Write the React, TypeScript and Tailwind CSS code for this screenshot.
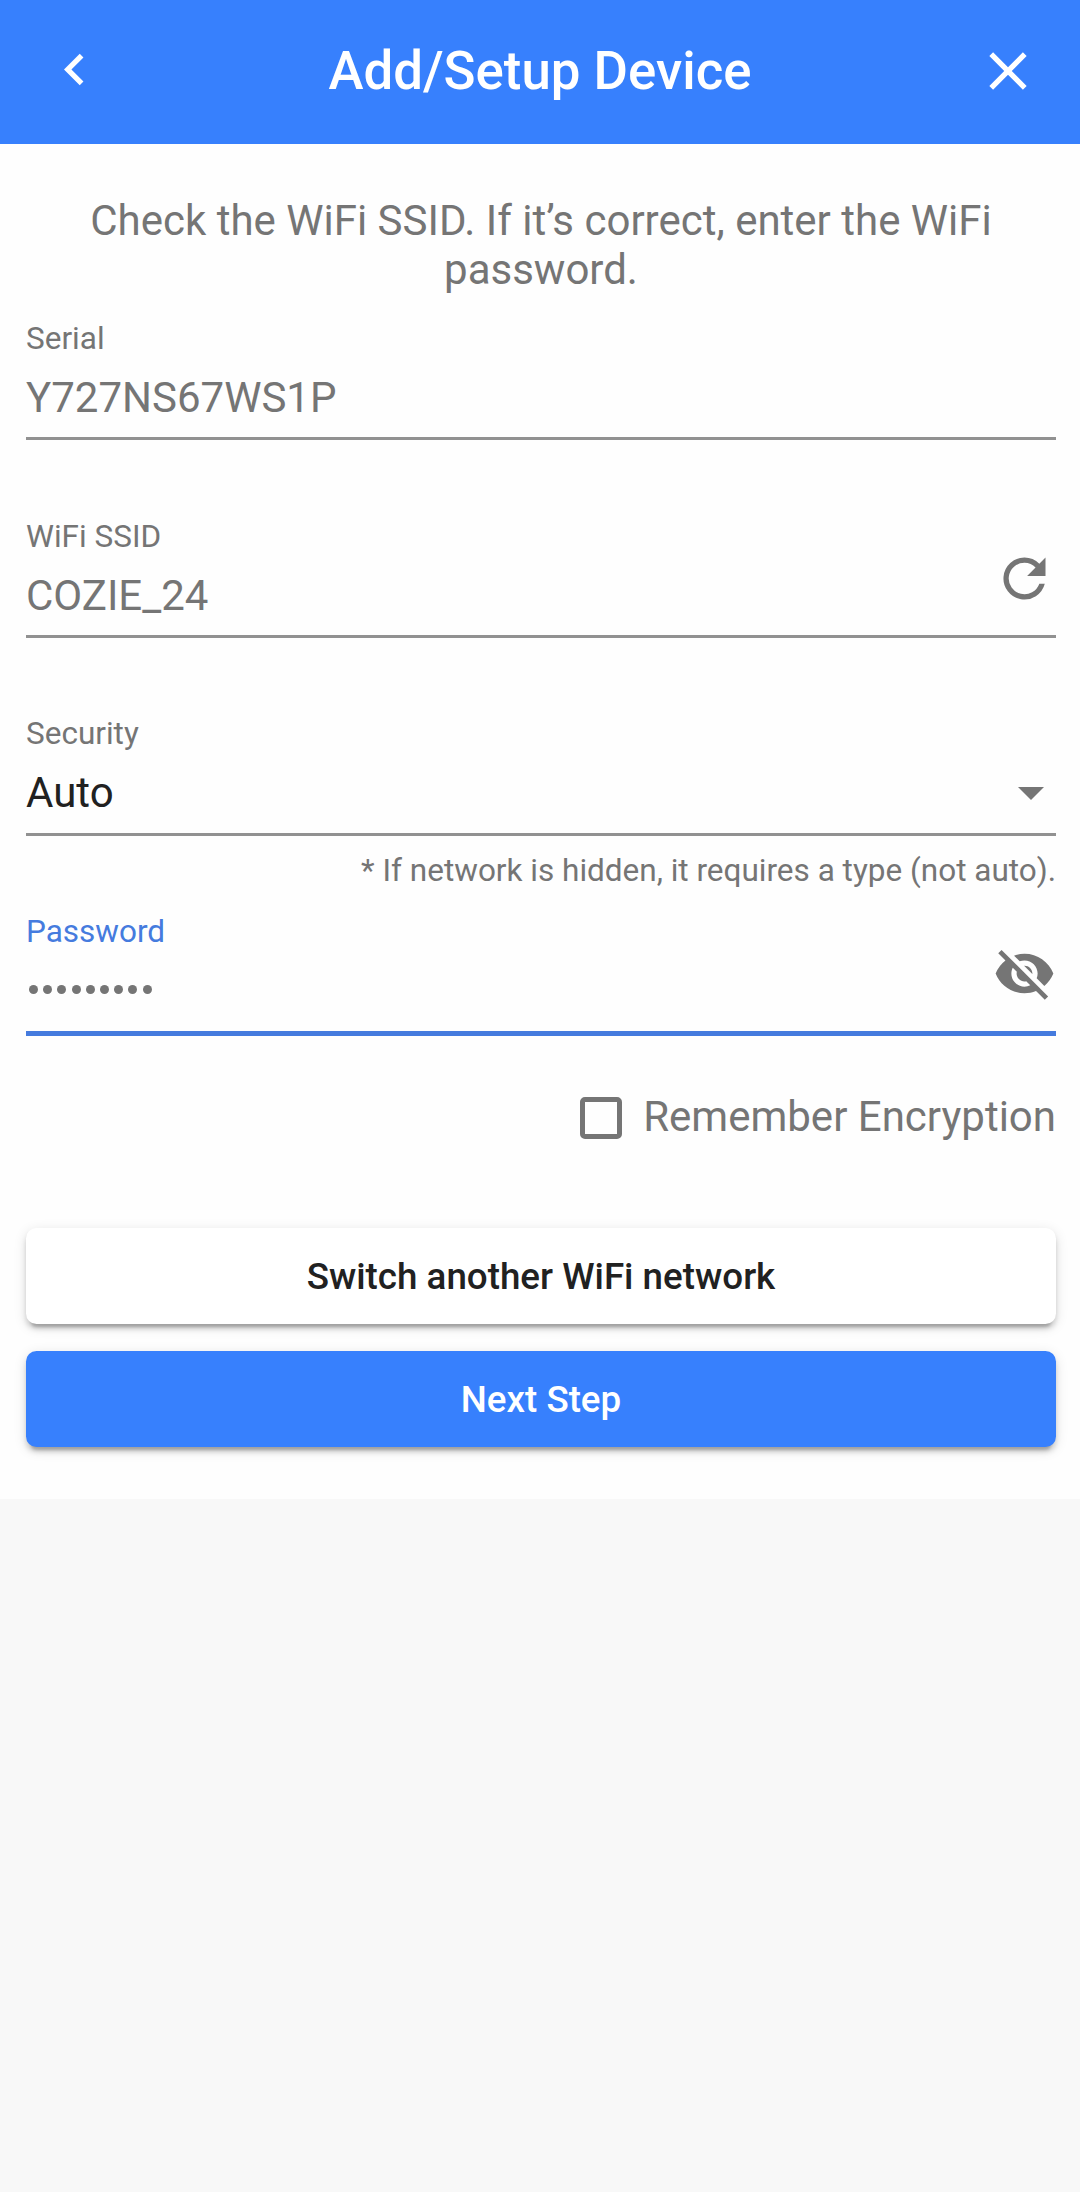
import React from "react";

const line = "h-[3px] bg-[#919191]";
const raised =
  "h-[96px] shrink-0 rounded-[10.5px] pt-[2px] text-[36.75px] font-medium shadow-[0_8px_3px_-5px_rgba(0,0,0,.2),0_5px_5px_rgba(0,0,0,.14),0_3px_13px_rgba(0,0,0,.12)]";

function Field({ label, value }: { label: string; value: string }) {
  return (
    <div className="flex flex-col pt-px">
      <span className="text-[31.5px] leading-[36px]">{label}</span>
      <span className="mt-[17px] text-[42px] leading-[48px]">{value}</span>
    </div>
  );
}

export default function App() {
  return (
    <div className="flex h-[2192px] w-[1080px] flex-col bg-[#f8f8f8] font-['Roboto',sans-serif] text-[#757575]">
      <header className="grid h-[144px] grid-cols-[106px_1fr_106px] items-center bg-[#3780fd] pb-[2px] text-white">
        <svg className="mb-[3px] ml-[43px] size-[63px]" viewBox="0 0 24 24" fill="currentColor">
          <path d="M15.41 7.41 14 6l-6 6 6 6 1.41-1.41L10.83 12z" />
        </svg>
        <h1 className="text-center text-[52.8px] leading-[60px] font-medium">Add/Setup Device</h1>
        <svg className="ml-[2px] size-[64px]" viewBox="0 0 24 24" fill="currentColor">
          <path d="M19 6.41 17.59 5 12 10.59 6.41 5 5 6.41 10.59 12 5 17.59 6.41 19 12 13.41 17.59 19 19 17.59 13.41 12z" />
        </svg>
      </header>
      <main className="flex h-[1355px] flex-col bg-[#fefefe] pt-[52px] pr-[24px] pl-[26px]">
        <p className="text-center text-[42px] leading-[49px]">Check the WiFi SSID. If it’s correct, enter the WiFi<br />password.</p>
        <section className="mt-[26px] flex h-[120px] flex-col justify-between">
          <Field label="Serial" value="Y727NS67WS1P" />
          <div className={line} />
        </section>
        <section className="mt-[78px] flex h-[120px] flex-col justify-between">
          <div className="flex justify-between">
            <Field label="WiFi SSID" value="COZIE_24" />
            <svg className="mt-[29px] size-[63px]" viewBox="0 0 24 24" fill="currentColor">
              <path d="M17.65 6.35A7.958 7.958 0 0 0 12 4a8 8 0 1 0 7.73 10h-2.08A6 6 0 1 1 12 6c1.66 0 3.14.69 4.22 1.78L13 11h7V4z" />
            </svg>
          </div>
          <div className={line} />
        </section>
        <section className="mt-[78px] flex h-[120px] flex-col justify-between">
          <div className="flex justify-between text-[#212121]">
            <div className="flex flex-col">
              <span className="text-[31.5px] leading-[36px] text-[#757575]">Security</span>
              <span className="mt-[17px] text-[42px] leading-[48px]">Auto</span>
            </div>
            <svg className="mt-[71px] mr-[12px] h-[13px] w-[26px] text-[#757575]" viewBox="0 0 26 13" fill="currentColor"><path d="M0 0h26L13 13z" /></svg>
          </div>
          <div className={line} />
        </section>
        <p className="mt-[17px] text-right text-[31.5px] leading-[36px]">* If network is hidden, it requires a type (not auto).</p>
        <section className="mt-[25px] flex h-[122px] flex-col justify-between">
          <div className="flex justify-between">
            <div className="flex flex-col">
              <span className="text-[31.5px] leading-[36px] text-[#457bde]">Password</span>
              <div className="mt-[35px] ml-[3px] flex gap-[5.2px]">
                {Array.from({ length: 9 }, (_, i) => <i key={i} className="size-[9px] rounded-full bg-[#757575]" />)}
              </div>
            </div>
            <svg className="mt-[28px] size-[63px]" viewBox="0 0 24 24" fill="currentColor">
              <path d="M12 7c2.76 0 5 2.24 5 5 0 .65-.13 1.26-.36 1.83l2.92 2.92c1.51-1.26 2.7-2.89 3.43-4.75-1.73-4.39-6-7.5-11-7.5-1.4 0-2.74.25-3.98.7l2.16 2.16C10.74 7.13 11.35 7 12 7zM2 4.27l2.28 2.28.46.46A11.804 11.804 0 0 0 1 12c1.73 4.39 6 7.5 11 7.5 1.55 0 3.03-.3 4.38-.84l.42.42L19.73 22 21 20.73 3.27 3 2 4.27zM7.53 9.8l1.55 1.55c-.05.21-.08.43-.08.65 0 1.66 1.34 3 3 3 .22 0 .44-.03.65-.08l1.55 1.55c-.67.33-1.41.53-2.2.53-2.76 0-5-2.24-5-5 0-.79.2-1.53.53-2.2zm4.31-.78 3.15 3.15.02-.16c0-1.66-1.34-3-3-3l-.17.01z" />
            </svg>
          </div>
          <div className="h-[5px] bg-[#457bde]" />
        </section>
        <label className="mt-[58px] flex h-[48px] items-center justify-end gap-[21px] text-[42px] leading-[48px]">
          <span className="size-[42px] rounded-[5px] border-[5px] border-[#757575]" />
          <span className="pb-[2px]">Remember Encryption</span>
        </label>
        <button className={`${raised} mt-[86px] bg-white text-[#212121]`}>Switch another WiFi network</button>
        <button className={`${raised} mt-[27px] bg-[#3780fd] text-white`}>Next Step</button>
      </main>
    </div>
  );
}
